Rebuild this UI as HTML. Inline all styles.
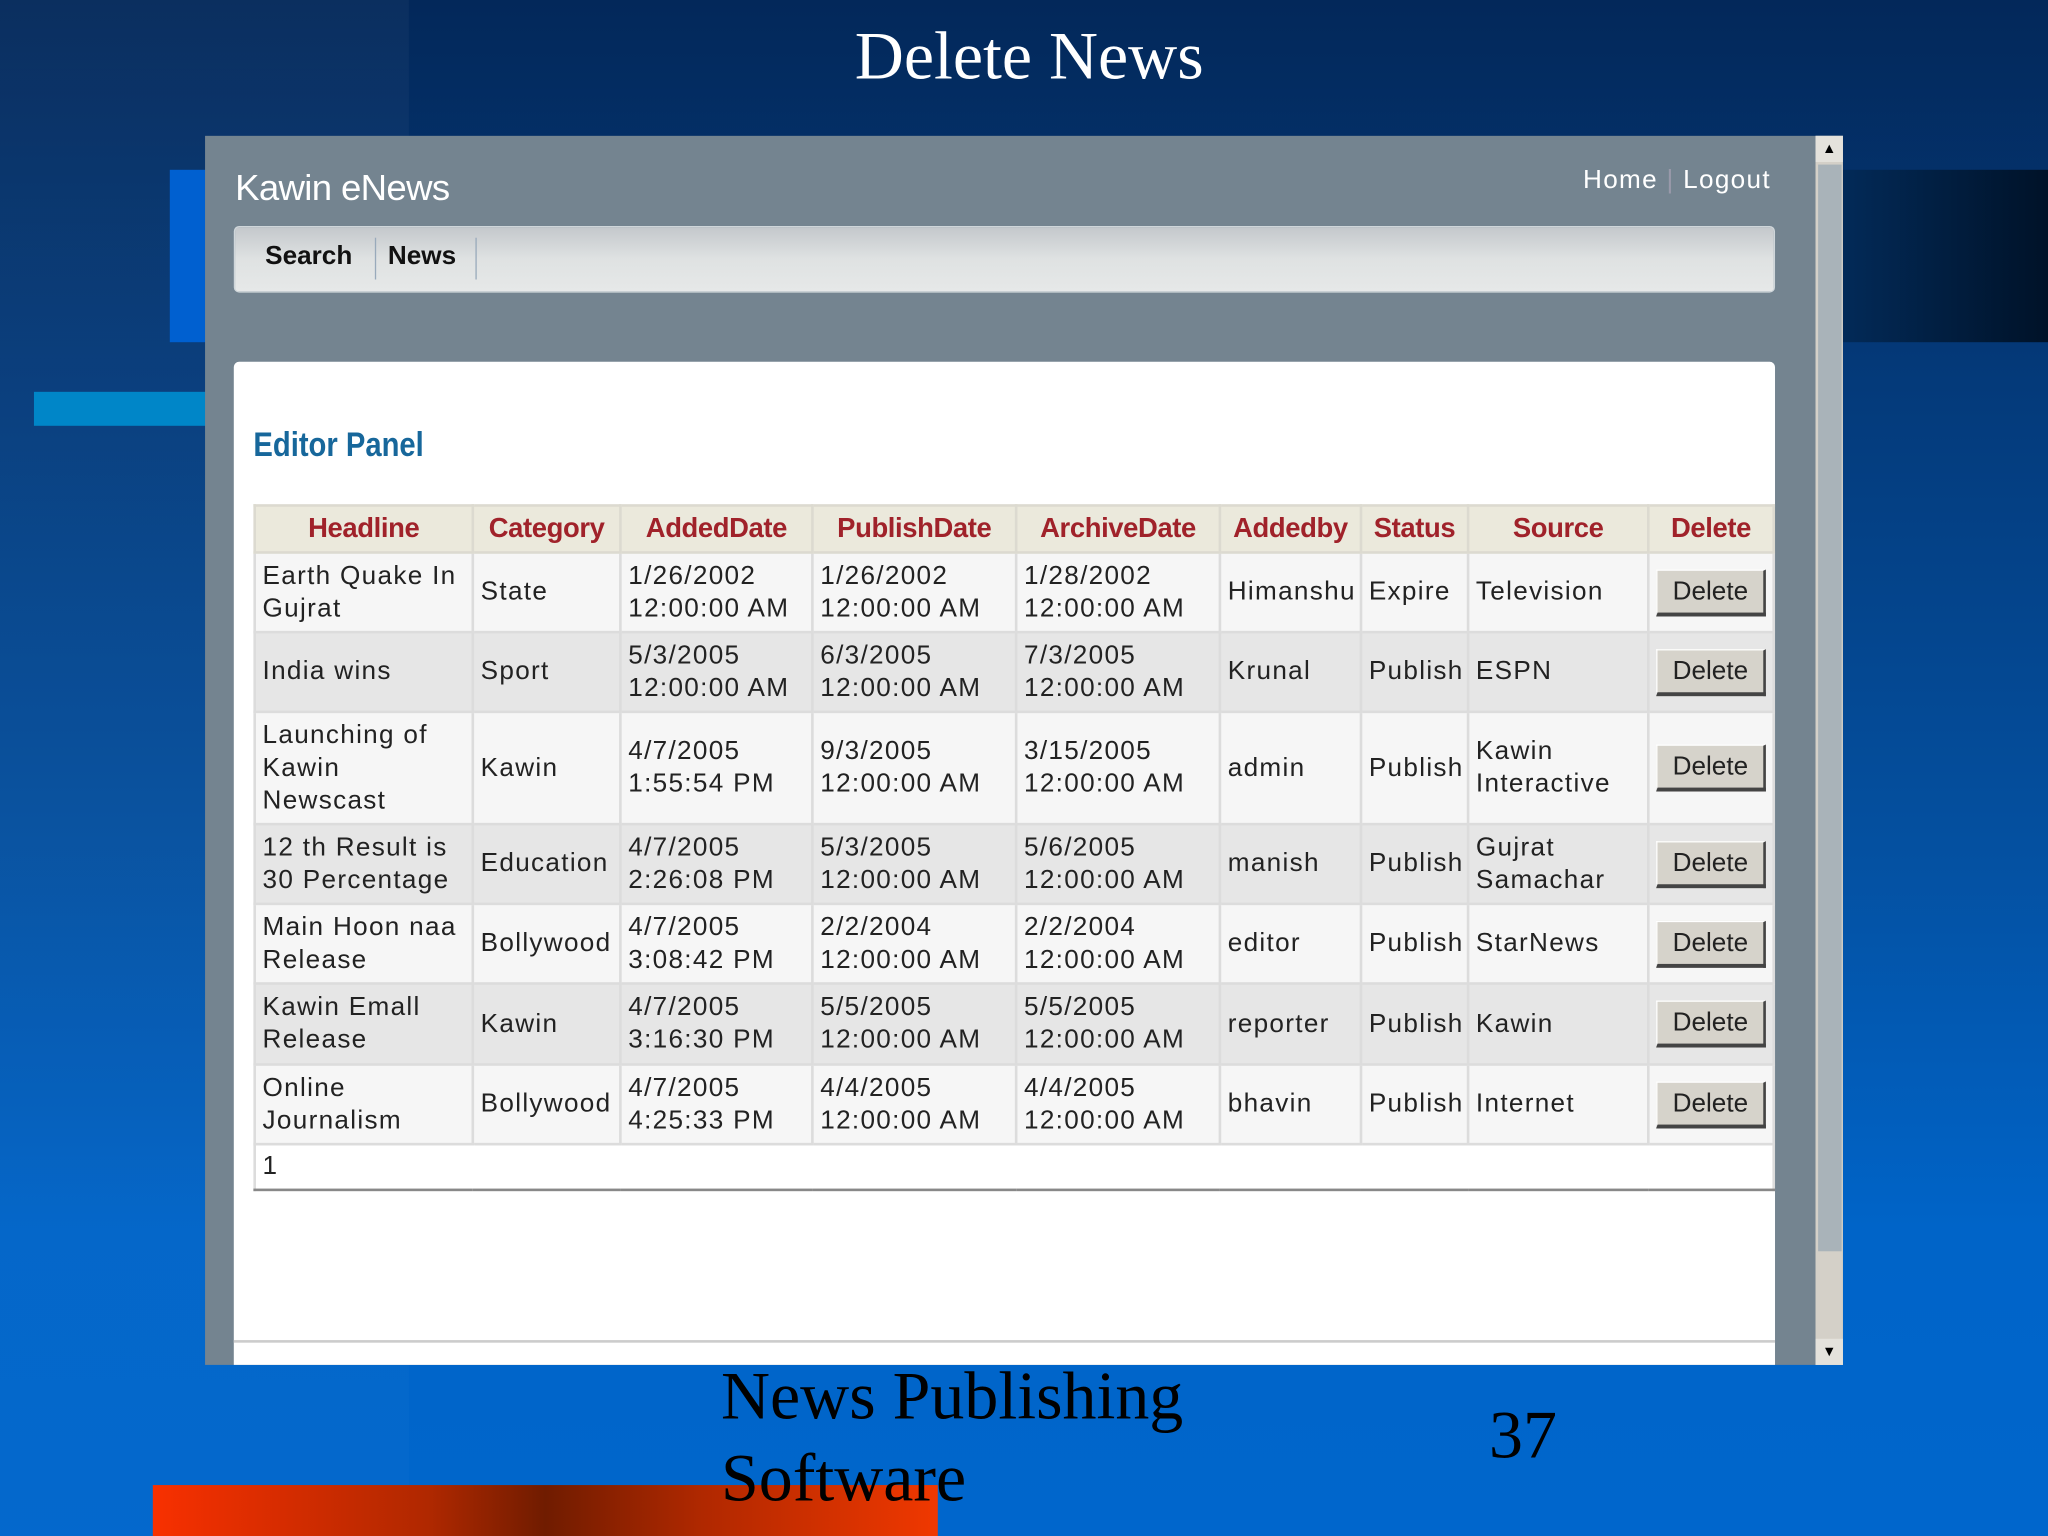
<!DOCTYPE html>
<html><head><meta charset="utf-8"><style>
html,body{margin:0;padding:0;width:2048px;height:1536px;overflow:hidden}
#w{position:absolute;left:0;top:0;width:1568px;height:1176px;transform:scale(1.306122);transform-origin:0 0;overflow:hidden;
background:linear-gradient(180deg,#03285a 0%,#043a7a 25%,#0450a0 55%,#0064c8 80%,#0066cc 100%);font-family:"Liberation Sans",sans-serif}
.abs{position:absolute}
td,th{font-family:"Liberation Sans",sans-serif}
table{border-collapse:collapse;table-layout:fixed;position:absolute;left:194px;top:386px;width:1165px}
th{height:34px;background:#ebe9dc;color:#a0222a;font-size:21px;font-weight:bold;border:2px solid #dcdad0;text-align:center;padding:0;letter-spacing:-0.3px}
td{border:2px solid #dcdcdc;font-size:20px;letter-spacing:1px;color:#222;padding:0 0 0 5px;line-height:25px;vertical-align:middle}
tr.a td{background:#f6f6f6}
tr.b td{background:#e6e6e6}
.btn{width:84px;height:36px;margin-left:0;background:#d6d3cb;border:1px solid #fff;border-right:2px solid #444;border-bottom:3px solid #444;box-sizing:border-box;text-align:center;line-height:32px;font-size:20px;letter-spacing:0}
</style></head><body><div id="w">
<div class="abs" style="left:0;top:0;width:313px;height:1176px;background:linear-gradient(180deg,rgba(255,255,255,0.03),rgba(255,255,255,0.015))"></div>
<div class="abs" style="left:130px;top:130px;width:30px;height:132px;background:#0060d0"></div>
<div class="abs" style="left:26px;top:300px;width:135px;height:26px;background:#0086c8"></div>
<div class="abs" style="left:1411px;top:130px;width:157px;height:132px;background:linear-gradient(90deg,#022a58,#001228)"></div>
<div class="abs" style="left:117px;top:1137px;width:601px;height:39px;background:linear-gradient(90deg,#f83000 0%,#b02800 35%,#701c00 50%,#b02800 70%,#f03800 100%)"></div>
<div class="abs" style="left:0;top:14px;width:1576px;text-align:center;color:#fff;font-family:'Liberation Serif',serif;font-size:52px">Delete News</div>

<div class="abs" style="left:157px;top:104px;width:1254px;height:941px;background:#748490"></div>
<div class="abs" style="left:1390px;top:104px;width:21px;height:941px;background:#d4d0c8"></div>
<div class="abs" style="left:1390px;top:104px;width:21px;height:20px;background:#e4e2dc;font-size:11px;text-align:center;line-height:20px">▲</div>
<div class="abs" style="left:1392px;top:126px;width:18px;height:832px;background:#a9b3b9"></div>
<div class="abs" style="left:1390px;top:1025px;width:21px;height:20px;background:#e4e2dc;font-size:11px;text-align:center;line-height:20px">▼</div>

<div class="abs" style="left:180px;top:128px;color:#fff;font-size:28px;letter-spacing:-0.5px">Kawin eNews</div>
<div class="abs" style="left:1212px;top:127px;color:#fff;font-size:20px;letter-spacing:1px">Home <span style="color:#99a">|</span> Logout</div>
<div class="abs" style="left:179px;top:173px;width:1178px;height:49px;border:1px solid #cfd6da;border-radius:4px;background:linear-gradient(180deg,#c4c8cc,#dfe2e2 50%,#e6e8e8)"></div>
<div class="abs" style="left:203px;top:185px;font-size:20px;font-weight:bold;color:#111">Search</div>
<div class="abs" style="left:287px;top:182px;width:1px;height:32px;background:#9ab"></div>
<div class="abs" style="left:297px;top:185px;font-size:20px;font-weight:bold;color:#111">News</div>
<div class="abs" style="left:364px;top:182px;width:1px;height:32px;background:#9ab"></div>

<div class="abs" style="left:179px;top:277px;width:1180px;height:768px;background:#fff;border-radius:4px 4px 0 0"></div>
<div class="abs" style="left:179px;top:1026px;width:1180px;height:2px;background:#ccc"></div>
<div class="abs" style="left:194px;top:325px;font-size:26px;font-weight:bold;color:#17679b;transform:scaleX(0.86);transform-origin:0 0">Editor Panel</div>

<table>
<colgroup><col style="width:167px"><col style="width:113px"><col style="width:147px"><col style="width:156px"><col style="width:156px"><col style="width:108px"><col style="width:82px"><col style="width:138px"><col style="width:96px"></colgroup>
<tr><th>Headline</th><th>Category</th><th>AddedDate</th><th>PublishDate</th><th>ArchiveDate</th><th>Addedby</th><th>Status</th><th>Source</th><th>Delete</th></tr>
<tr class="a" style="height:61px"><td>Earth Quake In Gujrat</td><td>State</td><td>1/26/2002 12:00:00 AM</td><td>1/26/2002 12:00:00 AM</td><td>1/28/2002 12:00:00 AM</td><td>Himanshu</td><td>Expire</td><td>Television</td><td><div class="btn">Delete</div></td></tr>
<tr class="b" style="height:61px"><td>India wins</td><td>Sport</td><td>5/3/2005 12:00:00 AM</td><td>6/3/2005 12:00:00 AM</td><td>7/3/2005 12:00:00 AM</td><td>Krunal</td><td>Publish</td><td>ESPN</td><td><div class="btn">Delete</div></td></tr>
<tr class="a" style="height:86px"><td>Launching of Kawin Newscast</td><td>Kawin</td><td>4/7/2005 1:55:54 PM</td><td>9/3/2005 12:00:00 AM</td><td>3/15/2005 12:00:00 AM</td><td>admin</td><td>Publish</td><td>Kawin Interactive</td><td><div class="btn">Delete</div></td></tr>
<tr class="b" style="height:61px"><td>12 th Result is 30 Percentage</td><td>Education</td><td>4/7/2005 2:26:08 PM</td><td>5/3/2005 12:00:00 AM</td><td>5/6/2005 12:00:00 AM</td><td>manish</td><td>Publish</td><td>Gujrat Samachar</td><td><div class="btn">Delete</div></td></tr>
<tr class="a" style="height:61px"><td>Main Hoon naa Release</td><td>Bollywood</td><td>4/7/2005 3:08:42 PM</td><td>2/2/2004 12:00:00 AM</td><td>2/2/2004 12:00:00 AM</td><td>editor</td><td>Publish</td><td>StarNews</td><td><div class="btn">Delete</div></td></tr>
<tr class="b" style="height:62px"><td>Kawin Emall Release</td><td>Kawin</td><td>4/7/2005 3:16:30 PM</td><td>5/5/2005 12:00:00 AM</td><td>5/5/2005 12:00:00 AM</td><td>reporter</td><td>Publish</td><td>Kawin</td><td><div class="btn">Delete</div></td></tr>
<tr class="a" style="height:61px"><td>Online Journalism</td><td>Bollywood</td><td>4/7/2005 4:25:33 PM</td><td>4/4/2005 12:00:00 AM</td><td>4/4/2005 12:00:00 AM</td><td>bhavin</td><td>Publish</td><td>Internet</td><td><div class="btn">Delete</div></td></tr>
<tr style="height:35px"><td colspan="9" style="background:#fff;border-bottom:2px solid #888">1</td></tr>
</table>

<div class="abs" style="left:552px;top:1038px;font-family:'Liberation Serif',serif;font-size:52px;line-height:63px;color:#000">News Publishing<br>Software</div>
<div class="abs" style="left:1140px;top:1070px;font-family:'Liberation Serif',serif;font-size:52px;color:#000">37</div>
</div></body></html>
